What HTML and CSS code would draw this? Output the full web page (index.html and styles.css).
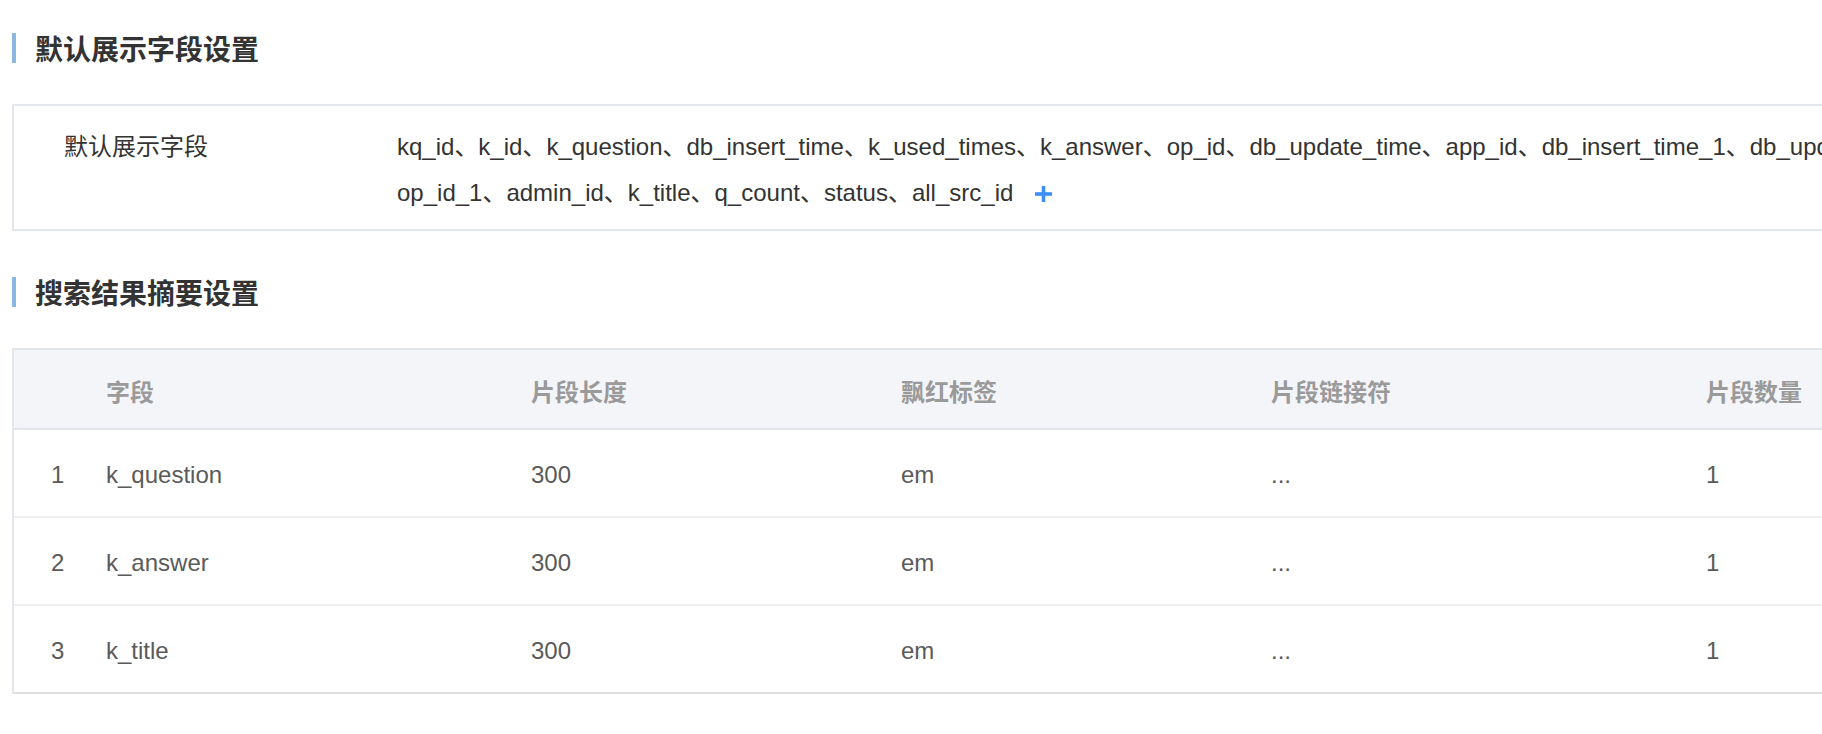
FILE: index.html
```html
<!DOCTYPE html>
<html lang="zh-CN">
<head>
<meta charset="utf-8">
<title>字段设置</title>
<link rel="stylesheet" href="styles.css">
</head>
<body>
<div class="page">
  <h2 class="section-title">默认展示字段设置</h2>
  <div class="field-box">
    <div class="field-label">默认展示字段</div>
    <div class="field-values">kq_id、k_id、k_question、db_insert_time、k_used_times、k_answer、op_id、db_update_time、app_id、db_insert_time_1、db_update_time_1、op_id_1、admin_id、k_title、q_count、status、all_src_id<span class="add-btn"><svg width="17" height="16" viewBox="0 0 17 16"><rect x="0" y="6.2" width="17" height="3.6" fill="#3d8ef6"/><rect x="6.7" y="0" width="3.6" height="16" fill="#3d8ef6"/></svg></span></div>
  </div>

  <h2 class="section-title">搜索结果摘要设置</h2>
  <div class="grid-table">
    <div class="row head">
      <div class="cell idx"></div>
      <div class="cell">字段</div>
      <div class="cell">片段长度</div>
      <div class="cell">飘红标签</div>
      <div class="cell">片段链接符</div>
      <div class="cell">片段数量</div>
    </div>
    <div class="row body">
      <div class="cell idx">1</div>
      <div class="cell">k_question</div>
      <div class="cell">300</div>
      <div class="cell">em</div>
      <div class="cell">...</div>
      <div class="cell">1</div>
    </div>
    <div class="row body">
      <div class="cell idx">2</div>
      <div class="cell">k_answer</div>
      <div class="cell">300</div>
      <div class="cell">em</div>
      <div class="cell">...</div>
      <div class="cell">1</div>
    </div>
    <div class="row body last">
      <div class="cell idx">3</div>
      <div class="cell">k_title</div>
      <div class="cell">300</div>
      <div class="cell">em</div>
      <div class="cell">...</div>
      <div class="cell">1</div>
    </div>
  </div>
</div>
</body>
</html>
```

FILE: styles.css
```css
html, body {
  margin: 0;
  padding: 0;
  background: #ffffff;
  overflow: hidden;
}

body {
  font-family: "Liberation Sans", "Noto Sans CJK SC", sans-serif;
  color: #333333;
  font-size: 24px;
}

.page {
  width: 2010px;
  padding: 33px 0 0 12px;
}

.section-title {
  margin: 0 0 41px 0;
  height: 30px;
  line-height: 36px;
  border-left: 4px solid #8ab7e2;
  padding-left: 19px;
  font-size: 28px;
  font-weight: 600;
  color: #333333;
}

.field-box {
  display: flex;
  border: 2px solid #e4e8ed;
  border-right: none;
  padding: 18px 0 13px 0;
  margin-bottom: 46px;
  line-height: 46px;
}

.field-label {
  width: 333px;
  flex: none;
  padding-left: 50px;
  color: #333333;
}

.field-values {
  width: 1600px;
  color: #333333;
}

.add-btn {
  display: inline-block;
  margin-left: 22px;
  vertical-align: -1px;
}

.add-btn svg {
  display: block;
}

.grid-table {
  border-left: 2px solid #e3e7ec;
  border-top: 2px solid #e3e7ec;
}

.row {
  display: grid;
  grid-template-columns: 92px 425px 370px 370px 435px 1fr;
  align-items: center;
}

.row.head {
  height: 78px;
  background: #f4f5f9;
  border-bottom: 2px solid #e3e7ec;
  color: #9a9a9a;
  font-weight: 600;
}

.row.head .cell {
  padding-top: 3px;
}

.row.body {
  height: 86px;
  border-bottom: 2px solid #eceef1;
  color: #5a5a5a;
}

.row.body .cell {
  padding-top: 4px;
}

.row.body.last {
  border-bottom-color: #dfdfdf;
}

.cell.idx {
  padding-left: 37px;
}
```
